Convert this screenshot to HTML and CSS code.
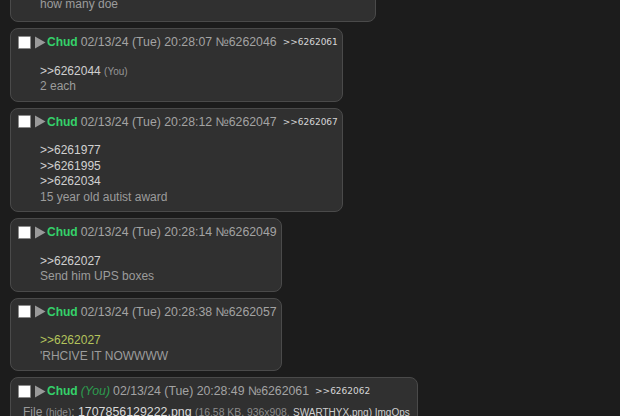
FILE: index.html
```html
<!DOCTYPE html>
<html>
<head>
<meta charset="utf-8">
<link rel="stylesheet" href="styles.css">
</head>
<body>
<div class="thread">
  <div class="post first">
    <blockquote class="msg"><span class="txt">how many doe</span></blockquote>
  </div>

  <div class="post">
    <div class="head">
      <span class="cb"></span>
      <svg class="tri" width="12" height="13" viewBox="0 0 12 13"><path d="M1 0.5 L11.5 6.5 L1 12.5 Z" fill="#9a9a9a"/></svg>
      <span class="name">Chud</span>
      <span class="date">02/13/24 (Tue) 20:28:07 №6262046</span>
      <span class="back">&gt;&gt;6262061</span>
    </div>
    <blockquote class="msg">
      <div><span class="ql">&gt;&gt;6262044</span> <span class="you">(You)</span></div>
      <div class="txt">2 each</div>
    </blockquote>
  </div>

  <div class="post">
    <div class="head">
      <span class="cb"></span>
      <svg class="tri" width="12" height="13" viewBox="0 0 12 13"><path d="M1 0.5 L11.5 6.5 L1 12.5 Z" fill="#9a9a9a"/></svg>
      <span class="name">Chud</span>
      <span class="date">02/13/24 (Tue) 20:28:12 №6262047</span>
      <span class="back">&gt;&gt;6262067</span>
    </div>
    <blockquote class="msg">
      <div class="ql">&gt;&gt;6261977</div>
      <div class="ql">&gt;&gt;6261995</div>
      <div class="ql">&gt;&gt;6262034</div>
      <div class="txt">15 year old autist award</div>
    </blockquote>
  </div>

  <div class="post">
    <div class="head">
      <span class="cb"></span>
      <svg class="tri" width="12" height="13" viewBox="0 0 12 13"><path d="M1 0.5 L11.5 6.5 L1 12.5 Z" fill="#9a9a9a"/></svg>
      <span class="name">Chud</span>
      <span class="date">02/13/24 (Tue) 20:28:14 №6262049</span>
    </div>
    <blockquote class="msg">
      <div class="ql">&gt;&gt;6262027</div>
      <div class="txt">Send him UPS boxes</div>
    </blockquote>
  </div>

  <div class="post">
    <div class="head">
      <span class="cb"></span>
      <svg class="tri" width="12" height="13" viewBox="0 0 12 13"><path d="M1 0.5 L11.5 6.5 L1 12.5 Z" fill="#9a9a9a"/></svg>
      <span class="name">Chud</span>
      <span class="date">02/13/24 (Tue) 20:28:38 №6262057</span>
    </div>
    <blockquote class="msg">
      <div class="ql dead">&gt;&gt;6262027</div>
      <div class="txt">'RHCIVE IT NOWWWW</div>
    </blockquote>
  </div>

  <div class="post">
    <div class="head">
      <span class="cb"></span>
      <svg class="tri" width="12" height="13" viewBox="0 0 12 13"><path d="M1 0.5 L11.5 6.5 L1 12.5 Z" fill="#9a9a9a"/></svg>
      <span class="name">Chud</span>
      <span class="youname">(You)</span>
      <span class="date">02/13/24 (Tue) 20:28:49 №6262061</span>
      <span class="back">&gt;&gt;6262062</span>
    </div>
    <div class="file">File <span class="sm">(hide)</span>: <span class="fname">1707856129222.png</span> <span class="info">(16.58 KB, 936x908,</span> <span class="orig">SWARTHYX.png) ImgOps</span></div>
  </div>
</div>
</body>
</html>
```
FILE: styles.css
```css
html, body {
  margin: 0;
  padding: 0;
  background: #1c1c1c;
  overflow: hidden;
  height: 416px;
}
body {
  font-family: "Liberation Sans", Arial, sans-serif;
  font-size: 12px;
  color: #a0a0a0;
}
.thread {
  display: flex;
  flex-direction: column;
  align-items: flex-start;
  gap: 6px;
  padding-left: 10px;
  margin-top: -22px;
}
.post {
  background: #303030;
  border: 1px solid #4a4a4a;
  border-radius: 8px;
  padding: 4px 4px 6px 7px;
}
.post.first {
  width: 353px;
  height: 42px;
  padding-top: 0;
  padding-bottom: 0;
  display: flex;
  align-items: flex-end;
}
.post.first .msg {
  margin: 0 0 9px 22px;
}
.head {
  display: flex;
  align-items: center;
  height: 18px;
  white-space: nowrap;
}
.cb {
  width: 11px;
  height: 11px;
  background: #fff;
  border: 1px solid #8a8a8a;
  border-radius: 1px;
  margin-right: 3px;
}
.tri {
  display: block;
  margin-right: 1px;
}
.name {
  color: #35d16a;
  font-weight: bold;
  margin-right: 3px;
}
.youname {
  color: #2d9c4f;
  font-style: italic;
  font-size: 12.3px;
  margin-right: 3px;
}
.date {
  color: #a3a3a3;
  font-size: 12.3px;
}
.back {
  font-family: "DejaVu Sans", Verdana, sans-serif;
  font-size: 9px;
  color: #d6d6d6;
  margin-left: 6px;
}
.msg {
  margin: 12.5px 0 0 22px;
  line-height: 15.5px;
}
.ql {
  color: #d0d0d0;
}
.ql.dead {
  color: #b4c45c;
}
.you {
  font-size: 10px;
  color: #959595;
}
.txt {
  color: #9c9c9c;
}
.file {
  margin: 5px 0 0 5px;
  white-space: nowrap;
  color: #9a9a9a;
  width: 390px;
  overflow: hidden;
}
.sm {
  font-size: 10px;
  color: #8c8c8c;
}
.fname {
  color: #d8d8d8;
  font-size: 12.4px;
}
.info {
  font-size: 10.4px;
  color: #8c8c8c;
}
.orig {
  font-size: 10px;
  color: #cfcfcf;
}
```
